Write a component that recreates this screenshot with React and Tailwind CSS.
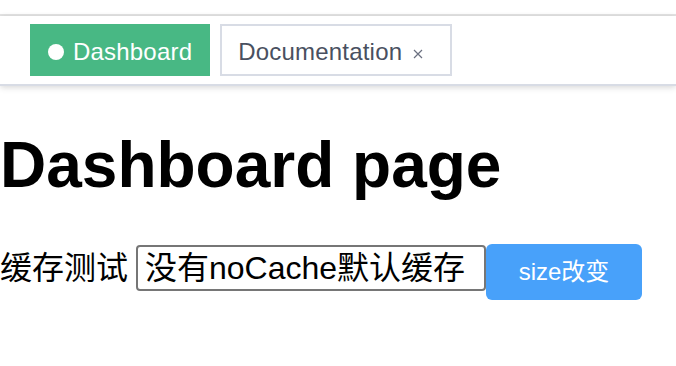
import React from "react";

const font = {
  fontFamily: '"Liberation Sans", "Noto Sans CJK SC", sans-serif',
};

const TagsView = () => {
  return (
    <div className="h-[70px] border-b-2 border-[#d8dce5] bg-white shadow-[0_2px_6px_0_rgba(0,0,0,0.12),0_0_6px_0_rgba(0,0,0,0.04)] flex items-start pt-2 pl-[30px] gap-[10px]">
      <div className="h-[52px] flex items-center bg-[#48b884] border-2 border-[#48b884] px-4 text-white text-[24px] tracking-[0.2px]">
        <span className="w-4 h-4 rounded-full bg-white mt-[4px]" />
        <span className="ml-[9px] mt-[3px]">Dashboard</span>
      </div>
      <div className="h-[52px] flex items-center border-2 border-[#d8dce5] px-4 text-[#495060] text-[24px] tracking-[0.2px]">
        <span className="mt-[3px]">Documentation</span>
        <span className="w-8 h-8 flex items-center justify-center mt-[8px]">
          <svg width="10" height="10" viewBox="0 0 10 10">
            <path d="M1 1L9 9M9 1L1 9" stroke="#6b7080" strokeWidth="1.2" />
          </svg>
        </span>
      </div>
    </div>
  );
};

export default function App() {
  return (
    <div className="w-[676px] h-[366px] bg-white overflow-hidden" style={font}>
      <div className="h-4 border-b-2 border-[#e4e4e4]" />
      <TagsView />
      <h1 className="mt-[42px] text-[64px] leading-[74px] font-bold text-black">
        Dashboard page
      </h1>
      <div className="mt-[42px] flex items-start">
        <span className="text-[32px] leading-[40px] mt-[4px] w-[136px] text-black">
          缓存测试
        </span>
        <input
          className="mt-[1px] w-[350px] h-[46px] border-2 border-[#767676] rounded-[4px] pl-[7px] pr-1 text-[32px] text-black outline-none"
          defaultValue="没有noCache默认缓存"
        />
        <button className="h-[56px] w-[156px] rounded-[6px] bg-[#48a1fa] text-white text-[24px]">
          size改变
        </button>
      </div>
    </div>
  );
}
